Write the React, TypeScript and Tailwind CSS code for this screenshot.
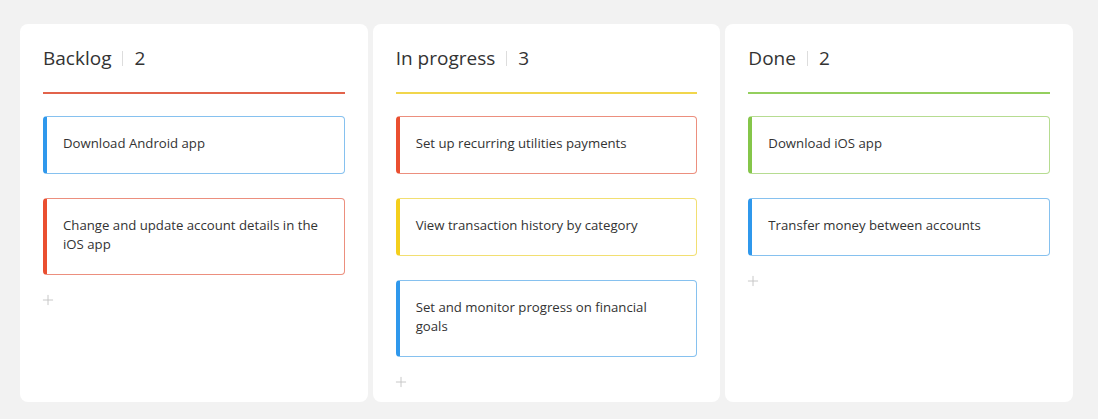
import { Plus } from "lucide-react";

type Tone = "red" | "blue" | "yellow" | "green";

type Task = {
  title: string;
  tone: Tone;
};

type Column = {
  name: string;
  line: string;
  tasks: Task[];
};

const toneClass: Record<Tone, string> = {
  red: "border-[#ec8f7e] border-l-[#ea4f30]",
  blue: "border-[#86c1ef] border-l-[#2f98ec]",
  yellow: "border-[#f2df72] border-l-[#f4cf1c]",
  green: "border-[#b6dc91] border-l-[#85c64a]",
};

const columns: Column[] = [
  {
    name: "Backlog",
    line: "bg-[#e2634b]",
    tasks: [
      { title: "Download Android app", tone: "blue" },
      { title: "Change and update account details in the iOS app", tone: "red" },
    ],
  },
  {
    name: "In progress",
    line: "bg-[#f1d64c]",
    tasks: [
      { title: "Set up recurring utilities payments", tone: "red" },
      { title: "View transaction history by category", tone: "yellow" },
      { title: "Set and monitor progress on financial goals", tone: "blue" },
    ],
  },
  {
    name: "Done",
    line: "bg-[#94cf5e]",
    tasks: [
      { title: "Download iOS app", tone: "green" },
      { title: "Transfer money between accounts", tone: "blue" },
    ],
  },
];

function TaskCard({ task }: { task: Task }) {
  return (
    <div
      className={`rounded-[4px] border border-l-4 bg-white pt-[17px] pb-[20px] pl-4 pr-4 text-[13.2px] leading-[19px] text-[#333333] ${toneClass[task.tone]}`}
    >
      {task.title}
    </div>
  );
}

function BoardColumn({ column }: { column: Column }) {
  return (
    <div className="flex h-[378px] flex-1 flex-col rounded-lg bg-white px-[23px] pt-5">
      <div className="flex items-center text-[19px] leading-[28px] text-[#333333]">
        <span>{column.name}</span>
        <span className="ml-[11px] h-[15px] w-px bg-[#dddddd]" />
        <span className="ml-[11px]">{column.tasks.length}</span>
      </div>
      <div className={`mt-5 h-[2px] w-full ${column.line}`} />
      <div className="mt-[22px] flex flex-col gap-6">
        {column.tasks.map((task) => (
          <TaskCard key={task.title} task={task} />
        ))}
      </div>
      <button type="button" className="mt-[17px] ml-[-3px] w-fit text-[#c4c4c4]">
        <Plus size={16} strokeWidth={1.4} />
      </button>
    </div>
  );
}

export default function App() {
  return (
    <div
      className="flex h-[419px] w-[1098px] gap-[5px] bg-[#f2f2f2] pt-6 pl-5 pr-[25px]"
      style={{ fontFamily: '"Open Sans", "Noto Sans", sans-serif' }}
    >
      {columns.map((column) => (
        <BoardColumn key={column.name} column={column} />
      ))}
    </div>
  );
}
